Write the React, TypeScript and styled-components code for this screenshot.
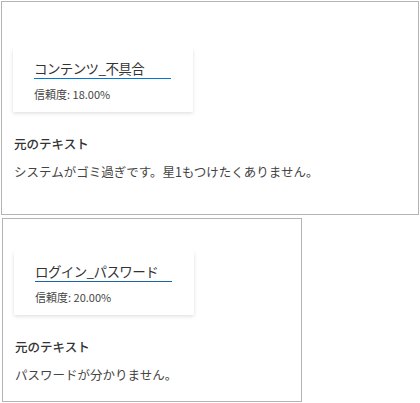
import styled, { createGlobalStyle } from 'styled-components';

const GlobalStyle = createGlobalStyle`
	body {
		margin: 0;
		background: #ffffff;
		font-family: 'Noto Sans CJK JP', 'Noto Sans', sans-serif;
		color: #333333;
	}
`;

type Result = {
	intent: string;
	confidence: number;
	text: string;
	accent: string;
};

const RESULTS: Result[] = [
	{
		intent: 'コンテンツ_不具合',
		confidence: 18,
		text: 'システムがゴミ過ぎです。星1もつけたくありません。',
		accent: '#0078d4',
	},
	{
		intent: 'ログイン_パスワード',
		confidence: 20,
		text: 'パスワードが分かりません。',
		accent: '#1f62a8',
	},
];

const PANEL_LAYOUT = [
	{ width: 418, height: 214, top: 46, left: 1, marginTop: 1 },
	{ width: 300, height: 184, top: 32, left: 2, marginTop: 3 },
];

const App = () => (
	<>
		<GlobalStyle />
		<Page>
			{RESULTS.map((result, i) => {
				const layout = PANEL_LAYOUT[i];
				return (
					<Panel
						key={result.intent}
						$width={layout.width}
						$height={layout.height}
						$top={layout.top}
						$left={layout.left}
						$marginTop={layout.marginTop}
					>
						<IntentCard>
							<IntentName $accent={result.accent}>{result.intent}</IntentName>
							<Confidence>信頼度: {result.confidence.toFixed(2)}%</Confidence>
						</IntentCard>
						<SectionTitle>元のテキスト</SectionTitle>
						<SourceText>{result.text}</SourceText>
					</Panel>
				);
			})}
		</Page>
	</>
);

const Page = styled.div`
	display: flex;
	flex-direction: column;
	align-items: flex-start;
`;

const Panel = styled.section<{
	$width: number;
	$height: number;
	$top: number;
	$left: number;
	$marginTop: number;
}>`
	box-sizing: border-box;
	width: ${(props) => props.$width}px;
	height: ${(props) => props.$height}px;
	margin-top: ${(props) => props.$marginTop}px;
	margin-left: ${(props) => props.$left}px;
	padding: ${(props) => props.$top}px 11px 0 11px;
	border: 1px solid #b4b4b4;
	display: flex;
	flex-direction: column;
	align-items: flex-start;
`;

const IntentCard = styled.div`
	box-sizing: border-box;
	width: 180px;
	height: 64px;
	padding: 11px 0 0 21px;
	background: #ffffff;
	box-shadow: 0 1.6px 3.6px rgba(0, 0, 0, 0.13), 0 0.3px 0.9px rgba(0, 0, 0, 0.1);
	display: flex;
	flex-direction: column;
`;

const IntentName = styled.div<{ $accent: string }>`
	width: 137px;
	font-size: 13.5px;
	letter-spacing: -0.6px;
	line-height: 19px;
	color: #333333;
	border-bottom: 1px solid ${(props) => props.$accent};
`;

const Confidence = styled.div`
	margin-top: 8px;
	font-size: 11px;
	line-height: 14px;
	color: #444444;
`;

const SectionTitle = styled.h3`
	margin: 23px 0 0 1px;
	font-size: 12.5px;
	font-weight: 500;
	line-height: 18px;
	color: #333333;
`;

const SourceText = styled.p`
	margin: 10px 0 0 1px;
	font-size: 12.5px;
	line-height: 18px;
	color: #444444;
`;

export default App;
